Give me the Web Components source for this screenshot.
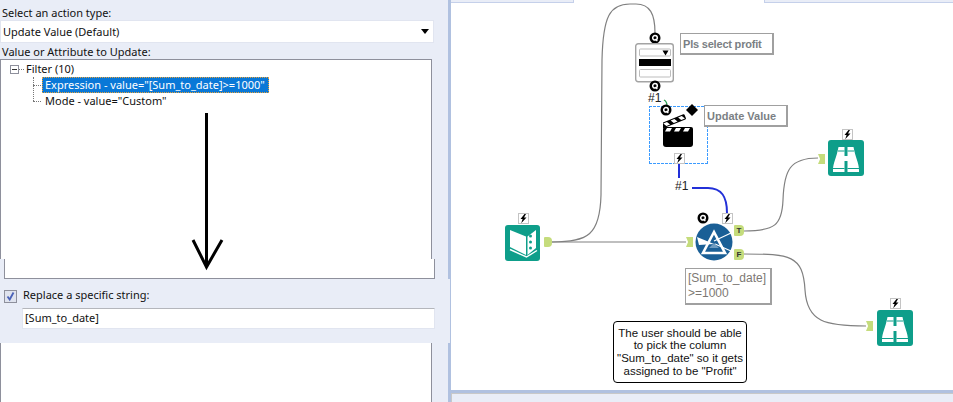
<!DOCTYPE html>
<html>
<head>
<meta charset="utf-8">
<title>Workflow</title>
<style>
  html, body { margin: 0; height: 402px; overflow: hidden; background: #e9edf7; }
  body { display: flex; font-family: "Noto Sans", sans-serif; font-size: 11px; color: #111; }
</style>
</head>
<body>
  <action-panel></action-panel>
  <flow-canvas>
    <canvas-icon kind="book" x="505" y="225" w="35" h="36"></canvas-icon>
    <canvas-badge kind="bolt" x="518" y="213"></canvas-badge>
    <canvas-anchor x="544" y="237" w="8" h="10" side="out"></canvas-anchor>

    <canvas-badge kind="q" x="649" y="32"></canvas-badge>
    <canvas-icon kind="interface" x="635" y="43" w="39" h="40"></canvas-icon>
    <canvas-badge kind="q" x="649" y="80"></canvas-badge>
    <canvas-text x="648" y="91">#1</canvas-text>
    <canvas-note x="680" y="33" w="94" h="22" style="letter-spacing:-.2px">Pls select profit</canvas-note>

    <canvas-dashed x="649" y="106" w="59" h="58"></canvas-dashed>
    <canvas-icon kind="action" x="663" y="114" w="31" h="34"></canvas-icon>
    <canvas-badge kind="q" x="660" y="104"></canvas-badge>
    <canvas-badge kind="diamond" x="686" y="104"></canvas-badge>
    <canvas-badge kind="bolt" x="674" y="153"></canvas-badge>
    <canvas-note x="704" y="105" w="84" h="22">Update Value</canvas-note>
    <canvas-text x="675" y="179">#1</canvas-text>

    <canvas-icon kind="filter" x="695" y="223" w="38" h="38"></canvas-icon>
    <canvas-badge kind="q" x="697" y="212"></canvas-badge>
    <canvas-badge kind="bolt" x="722" y="213"></canvas-badge>
    <canvas-anchor x="686" y="237" w="7" h="10" side="in"></canvas-anchor>
    <canvas-anchor x="734" y="225" w="10" h="11" side="out" label="T"></canvas-anchor>
    <canvas-anchor x="734" y="249" w="10" h="11" side="out" label="F"></canvas-anchor>
    <canvas-note x="685" y="268" w="87" h="37" thin>[Sum_to_date]<br>&gt;=1000</canvas-note>

    <canvas-icon kind="binoculars" x="828" y="140" w="36" h="36"></canvas-icon>
    <canvas-badge kind="bolt" x="842" y="129"></canvas-badge>
    <canvas-anchor x="818" y="154" w="7" h="10" side="in"></canvas-anchor>

    <canvas-icon kind="binoculars" x="877" y="310" w="36" h="35"></canvas-icon>
    <canvas-badge kind="bolt" x="890" y="298"></canvas-badge>
    <canvas-anchor x="866" y="321" w="7" h="10" side="in"></canvas-anchor>

    <canvas-comment x="613" y="321" w="134" h="62">The user should be able<br>to pick the column<br>"Sum_to_date" so it gets<br>assigned to be "Profit"</canvas-comment>
  </flow-canvas>

<script>
  const panelTemplate = document.createElement("template");
  panelTemplate.innerHTML = `
    <style>
      :host {
        display: flex;
        flex-direction: column;
        position: relative;
        width: 448px;
        flex: none;
        height: 402px;
        line-height: 16px;
      }
      .label { height: 15px; padding: 1px 0 0 2px; }
      .first { height: 15px; padding-top: 5px; }
      .select {
        width: 430px;
        height: 21px;
        background: #fff;
        border: 1px solid #e1e5f0;
        padding-left: 2px;
        display: flex;
        justify-content: space-between;
        align-items: center;
        line-height: 21px;
      }
      .select svg { margin-right: 4px; }
      .tree {
        width: 430px;
        height: 198px;
        background: #fff;
        border: 1px solid #8e909c;
        border-bottom: 0;
        padding-top: 1px;
        box-sizing: content-box;
      }
      .tree-end {
        width: 429px;
        height: 19px;
        margin-left: 4px;
        background: #fff;
        border: 1px solid #8e909c;
        border-top: 0;
      }
      .root, .leaf { display: flex; align-items: center; height: 16px; }
      .root { padding-left: 9px; }
      .minus {
        width: 7px;
        height: 7px;
        border: 1px solid #8e909c;
        position: relative;
        flex: none;
      }
      .minus::after {
        content: "";
        position: absolute;
        left: 1px;
        right: 1px;
        top: 3px;
        height: 1px;
        background: #333;
      }
      .dots { width: 5px; border-top: 1px dotted #777; flex: none; margin-right: 2px; }
      .leaf { padding-left: 32px; }
      .leaf .dots { width: 8px; margin-right: 1px; }
      .leaf .text { padding: 0 3px; height: 16px; box-sizing: border-box; line-height: 15px; white-space: nowrap; }
      .leaf.selected .text {
        background: #0a78d7;
        color: #fff;
        outline: 1px dotted #e8a33a;
        outline-offset: -1px;
        width: 227px;
      }
      .branch { position: relative; }
      .branch::before {
        content: "";
        position: absolute;
        left: 32px;
        top: 0;
        height: 24px;
        border-left: 1px dotted #777;
      }
      .replace {
        margin-right: -2px;
        height: 64px;
        padding: 11px 0 0 4px;
        box-sizing: border-box;
        background: #e9edf7;
      }
      .check-row { display: flex; align-items: center; height: 13px; gap: 6px; }
      .check-row span:last-child { margin-top: -3px; }
      .box {
        width: 11px;
        height: 11px;
        border: 1px solid #8e909c;
        background: #dfe3ee;
        flex: none;
        display: flex;
      }
      .string {
        margin: 5px 15px 0 18px;
        height: 21px;
        box-sizing: border-box;
        background: #fff;
        border: 1px solid #e1e5f0;
        border-top-color: #b4b6bc;
        padding-left: 2px;
        line-height: 18px;
      }
      .rest {
        width: 430px;
        flex: 1;
        background: #fff;
        border: solid #8e909c;
        border-width: 0 1px;
      }
      .arrow { position: absolute; left: 185px; top: 110px; }
    </style>
    <div class="label first">Select an action type:</div>
    <div class="select">
      <span>Update Value (Default)</span>
      <svg width="8" height="5" viewBox="0 0 8 5"><path d="M0 0h8L4 5z" fill="#000"/></svg>
    </div>
    <div class="label">Value or Attribute to Update:</div>
    <div class="tree">
      <div class="root"><span class="minus"></span><span class="dots"></span><span>Filter (10)</span></div>
      <div class="branch">
        <div class="leaf selected"><span class="dots"></span><span class="text">Expression - value="[Sum_to_date]&gt;=1000"</span></div>
        <div class="leaf"><span class="dots"></span><span class="text">Mode - value="Custom"</span></div>
      </div>
    </div>
    <div class="tree-end"></div>
    <div class="replace">
      <div class="check-row">
        <span class="box"><svg width="11" height="11" viewBox="0 0 11 11"><path d="M2.5 5.5l2.2 3L8.5 1.5" fill="none" stroke="#4a62b8" stroke-width="1.8"/></svg></span>
        <span>Replace a specific string:</span>
      </div>
      <div class="string">[Sum_to_date]</div>
    </div>
    <div class="rest"></div>
    <svg class="arrow" width="44" height="162" viewBox="0 0 44 162">
      <path d="M21.5 3V156M8 130L21.5 157L37 130" fill="none" stroke="#000" stroke-width="3"/>
    </svg>
  `;

  class ActionPanel extends HTMLElement {
    constructor() {
      super();
      this.attachShadow({ mode: "open" }).appendChild(panelTemplate.content.cloneNode(true));
    }
  }
  customElements.define("action-panel", ActionPanel);

  const canvasTemplate = document.createElement("template");
  canvasTemplate.innerHTML = `
    <style>
      :host {
        display: flex;
        flex-direction: column;
        flex: 1;
        height: 402px;
        border-left: 3px solid #b0c1e0;
        min-width: 0;
      }
      .tabs { display: flex; height: 3px; flex: none; background: #fff; }
      .tabs span { background: #e9edf7; border-bottom: 1px solid #c5d0ea; box-sizing: border-box; }
      .tabs .a { width: 123px; border-right: 1px solid #c5d0ea; }
      .tabs .b { flex: 1; border-left: 1px solid #c5d0ea; }
      .tabs .gap { width: 190px; background: #fff; border: 0; }
      .sheet { position: relative; flex: 1; background: #fff; overflow: hidden; }
      .foot {
        height: 9px;
        flex: none;
        border-top: 3px solid #b0c1e0;
        background: #e9edf7;
        box-shadow: inset 1px 1px 0 #c8c8c8;
      }
      svg { position: absolute; left: 0; top: -3px; }
    </style>
    <div class="tabs"><span class="a"></span><span class="gap"></span><span class="b"></span></div>
    <div class="sheet">
      <svg width="502" height="390" viewBox="451 0 502 390" fill="none">
        <g stroke="#808080" stroke-width="1.2">
          <path d="M552 242H686"/>
          <path d="M552 242C588 242 600 235 601 195L602 60C603 16 610 4 630 4H636C650 4 655 14 655 33"/>
          <path d="M744 231C775 231 782 225 783 200C784 170 790 158 818 158"/>
          <path d="M744 254C790 254 803 255 805 290C807 322 825 326 866 326"/>
        </g>
        <path d="M664 100C666 101 667 103 667 106" stroke="#2e9e55" stroke-width="1.3"/>
        <path d="M679 163V178" stroke="#2230d8" stroke-width="2"/>
        <path d="M692 188H708C722 188 727 197 727 213" stroke="#2230d8" stroke-width="2"/>
      </svg>
      <slot></slot>
    </div>
    <div class="foot"></div>
  `;

  class FlowCanvas extends HTMLElement {
    constructor() {
      super();
      this.attachShadow({ mode: "open" }).appendChild(canvasTemplate.content.cloneNode(true));
    }
  }
  customElements.define("flow-canvas", FlowCanvas);

  // items sit on the free canvas, x/y are given in page coordinates
  class CanvasItem extends HTMLElement {
    constructor() {
      super();
      this.attachShadow({ mode: "open" });
    }
    connectedCallback() {
      this.style.left = this.getAttribute("x") - 451 + "px";
      this.style.top = this.getAttribute("y") - 3 + "px";
      if (this.hasAttribute("w")) this.style.width = this.getAttribute("w") + "px";
      if (this.hasAttribute("h")) this.style.height = this.getAttribute("h") + "px";
      this.render();
    }
  }

  const ICONS = {
    book: `<svg width="35" height="36" viewBox="0 0 35 36">
        <rect width="35" height="36" rx="3" fill="#0e9e8a"/>
        <path d="M5 5L21 11.5V30L5 22zM22.5 11.5L31 5V23L22.5 30z" fill="#fff"/>
        <circle cx="25.5" cy="11" r="1.5" fill="#0e9e8a"/>
        <circle cx="25.5" cy="17" r="1.5" fill="#0e9e8a"/>
        <circle cx="25.5" cy="23" r="1.5" fill="#0e9e8a"/>
        <path d="M5 24.5L21.5 32L32 25.5" fill="none" stroke="#fff" stroke-width="1.4"/>
      </svg>`,
    binoculars: `<svg width="36" height="36" viewBox="0 0 36 36">
        <rect width="36" height="36" rx="3" fill="#0e9e8a"/>
        <path d="M10.5 7H16.5V32H5V30C5 23 8.5 18 10.5 7zM25.5 7H19.5V32H31V30C31 23 27.5 18 25.5 7z" fill="#fff"/>
        <rect x="16" y="16" width="4" height="5" fill="#fff"/>
        <path d="M10 11H16.5M19.5 11H26M4 28.5H16.5M19.5 28.5H32" stroke="#0e9e8a" stroke-width="1.1"/>
      </svg>`,
    filter: `<svg width="38" height="38" viewBox="-19 -19 38 38">
        <circle r="18.5" fill="#1a5f96"/>
        <path d="M0 -10L-11 11H11z" fill="none" stroke="#fff" stroke-width="2.6"/>
        <path d="M-17 -5L0 2L-15 3z" fill="#fff"/>
        <path d="M0 -1L17 -9M1 2L17 9" stroke="#fff" stroke-width="1.2"/>
        <path d="M-5 6H5L0 1z" fill="#6f9cc0"/>
      </svg>`,
    action: `<svg width="31" height="34" viewBox="0 0 31 34">
        <path d="M0 15a2 2 0 0 1 2 -2H28a2 2 0 0 1 2 2V30a3 3 0 0 1 -3 3H3a3 3 0 0 1 -3 -3z" fill="#000"/>
        <path d="M4 14h5l-2 3.5H2zM13 14h5l-2 3.5h-5zM22 14h5l-2 3.5h-5z" fill="#fff"/>
        <g transform="translate(0 2) rotate(-22 1 12)">
          <rect x="0" y="6.5" width="25" height="5.5" rx="1" fill="#000"/>
          <path d="M2 7.5h4l2 3.5H4zM10 7.5h4l2 3.5h-4zM18 7.5h4l2 3.5h-4z" fill="#fff"/>
        </g>
      </svg>`,
    interface: `<svg width="39" height="40" viewBox="0 0 39 40">
        <rect x="0.7" y="0.7" width="37.6" height="38" rx="2.5" fill="#fff" stroke="#a3a3a3" stroke-width="1.4"/>
        <rect x="4.5" y="6" width="31" height="7" rx="1" fill="#fff" stroke="#bdbdbd"/>
        <path d="M27.5 7.5h6l-3 5z" fill="#000"/>
        <rect x="4" y="16" width="32" height="7" fill="#000"/>
        <rect x="4.5" y="26.5" width="31" height="7.5" rx="1" fill="#fff" stroke="#bdbdbd"/>
      </svg>`,
  };

  customElements.define("canvas-icon", class extends CanvasItem {
    render() {
      this.shadowRoot.innerHTML = `<style>:host{position:absolute;display:block;line-height:0}</style>` + ICONS[this.getAttribute("kind")];
    }
  });

  const BADGES = {
    q: `<svg width="12" height="12" viewBox="0 0 12 12">
        <circle cx="6" cy="6" r="5.5" fill="#000"/>
        <circle cx="6" cy="5.8" r="2.3" fill="none" stroke="#fff" stroke-width="1.5"/>
        <path d="M6.5 7L8.3 9.2" stroke="#fff" stroke-width="1.3"/>
      </svg>`,
    bolt: `<svg width="11" height="11" viewBox="0 0 11 11">
        <rect x="0.5" y="0.5" width="10" height="10" fill="#fff" stroke="#c4c4c4"/>
        <path d="M6.5 1L2.5 6H4.6L3.2 10.2L8.5 4.6H6L8 1z" fill="#000"/>
      </svg>`,
    diamond: `<svg width="12" height="12" viewBox="0 0 12 12"><path d="M6 0L12 6L6 12L0 6z" fill="#000"/></svg>`,
  };

  customElements.define("canvas-badge", class extends CanvasItem {
    render() {
      this.shadowRoot.innerHTML = `<style>:host{position:absolute;display:block;line-height:0}</style>` + BADGES[this.getAttribute("kind")];
    }
  });

  customElements.define("canvas-anchor", class extends CanvasItem {
    render() {
      const out = this.getAttribute("side") === "out";
      this.shadowRoot.innerHTML = `
        <style>
          :host {
            position: absolute;
            display: flex;
            align-items: center;
            justify-content: center;
            background: #c5dc7c;
            border-radius: ${out ? "1px 4px 4px 1px" : "0"};
            ${out ? "" : "clip-path: polygon(0 0, 100% 0, 100% 100%, 0 100%, 30% 50%);"}
            font: bold 8px "Liberation Sans", sans-serif;
            color: #333;
          }
        </style>${this.getAttribute("label") || ""}`;
    }
  });

  customElements.define("canvas-text", class extends CanvasItem {
    render() {
      this.shadowRoot.innerHTML = `
        <style>:host{position:absolute;display:block;font:12px/14px "Liberation Sans",sans-serif;color:#222}</style>
        <slot></slot>`;
    }
  });

  customElements.define("canvas-note", class extends CanvasItem {
    render() {
      const thin = this.hasAttribute("thin");
      this.shadowRoot.innerHTML = `
        <style>
          :host {
            position: absolute;
            display: block;
            box-sizing: border-box;
            background: #fff;
            border: 1px solid #a0a0a0;
            border-width: 1px 2px 2px 1px;
            padding: 2px 2px 0;
            font: ${thin ? "normal 12px/15px" : "bold 11px/16px"} "Liberation Sans", sans-serif;
            color: ${thin ? "#7d7873" : "#7b7f84"};
            white-space: nowrap;
          }
        </style><slot></slot>`;
    }
  });

  customElements.define("canvas-dashed", class extends CanvasItem {
    render() {
      const dash = (dir) => `repeating-linear-gradient(${dir}, #3b9bff 0 3px, transparent 3px 4px)`;
      this.shadowRoot.innerHTML = `
        <style>
          :host {
            position: absolute;
            display: block;
            background:
              ${dash("90deg")} top / 100% 1px no-repeat,
              ${dash("90deg")} bottom / 100% 1px no-repeat,
              ${dash("0deg")} left / 1px 100% no-repeat,
              ${dash("0deg")} right / 1px 100% no-repeat;
          }
        </style>`;
    }
  });

  customElements.define("canvas-comment", class extends CanvasItem {
    render() {
      this.shadowRoot.innerHTML = `
        <style>
          :host {
            position: absolute;
            display: flex;
            align-items: center;
            justify-content: center;
            box-sizing: border-box;
            background: #fff;
            border: 1px solid #000;
            border-radius: 4px;
            text-align: center;
            font: 11.5px/12.7px "Liberation Sans", sans-serif;
            color: #111;
          }
        </style><div><slot></slot></div>`;
    }
  });
</script>
</body>
</html>
